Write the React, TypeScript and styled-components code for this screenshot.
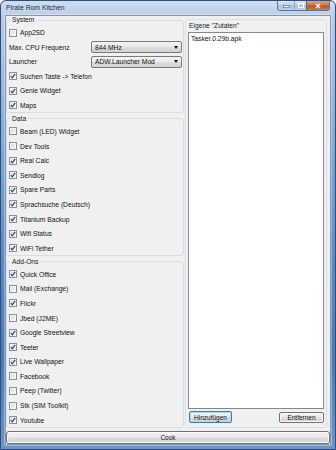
import React, { FC } from "react";
import styled, { createGlobalStyle } from "styled-components";

const GlobalStyle = createGlobalStyle`
  html, body {
    margin: 0;
    padding: 0;
    background: #ffffff;
  }
  * {
    box-sizing: border-box;
  }
`;

const Window = styled.div`
  width: 336px;
  height: 450px;
  display: flex;
  flex-direction: column;
  border: 1px solid #2f4f78;
  border-radius: 6px 6px 0 0;
  background: linear-gradient(180deg, #d0ddee 0%, #b6cbe6 4%, #8fb0da 25%, #5f8cc6 55%, #4a79b7 80%, #6a95cc 100%);
  font-family: "Liberation Sans", Arial, sans-serif;
  padding: 0 4px 4px 4px;
  overflow: hidden;
`;

const TitleBar = styled.div`
  height: 14px;
  display: flex;
  align-items: flex-start;
`;

const Title = styled.span`
  font-size: 6.8px;
  line-height: 8px;
  margin-top: 3px;
  margin-left: 1px;
  color: #1d2d44;
`;

const Captions = styled.div`
  margin-left: auto;
  display: flex;
  margin-right: 1px;
  border: 1px solid #5d7597;
  border-top: none;
  border-radius: 0 0 3px 3px;
  overflow: hidden;
  height: 10px;
`;

const CaptionButton = styled.div<{ $w: number; $close?: boolean }>`
  width: ${(p) => p.$w}px;
  height: 100%;
  display: flex;
  align-items: center;
  justify-content: center;
  background: ${(p) =>
    p.$close
      ? "linear-gradient(180deg, #e4a47f 0%, #cf7445 45%, #b8582a 55%, #c8794c 100%)"
      : "linear-gradient(180deg, #dbe6f3 0%, #c2d3e8 45%, #a9c0dd 55%, #bfd2ea 100%)"};
  border-left: ${(p) => (p.$close ? "1px solid #6e5a52" : "1px solid #8ea5c4")};
  &:first-child {
    border-left: none;
  }
`;

const Client = styled.div`
  flex: 1;
  display: flex;
  flex-direction: column;
  background: #f0f0f0;
  border: 1px solid #8397b3;
  box-shadow: 0 0 0 1px rgba(255, 255, 255, 0.35);
`;

const Main = styled.div`
  flex: 1;
  display: flex;
  min-height: 0;
`;

const LeftColumn = styled.div`
  width: 178px;
  display: flex;
  flex-direction: column;
  gap: 2px;
`;

const Group = styled.fieldset`
  margin: 0;
  min-width: 0;
  padding: 2px 1px 0 1px;
  border: 1px solid #d5dde5;
  border-radius: 3px;
  display: flex;
  flex-direction: column;
  gap: 1.6px;
`;

const Legend = styled.legend`
  font-size: 6.7px;
  line-height: 8px;
  padding: 0 2px;
  margin-left: 2px;
  color: #1a1a1a;
`;

const Row = styled.label`
  height: 13px;
  display: flex;
  align-items: center;
  gap: 3px;
  padding-left: 1px;
  font-size: 6.7px;
  color: #111;
  white-space: nowrap;
`;

const Box = styled.span`
  width: 8px;
  height: 8px;
  flex: none;
  border: 1px solid #8e8f8f;
  background: linear-gradient(135deg, #cfd3d9 0%, #e8eaed 55%, #f9f9f9 100%);
  box-shadow: inset 0 0 0 1px #f5f5f5;
  display: flex;
  align-items: center;
  justify-content: center;
`;

const FieldRow = styled.div`
  height: 13px;
  display: flex;
  align-items: center;
  padding-left: 1px;
  font-size: 6.7px;
  color: #111;
`;

const FieldLabel = styled.span`
  width: 82px;
`;

const Combo = styled.div`
  width: 91px;
  height: 12px;
  border: 1px solid #7a7a7a;
  border-radius: 2px;
  background: linear-gradient(180deg, #f3f3f3 0%, #ebebeb 45%, #dddddd 55%, #d2d2d2 100%);
  display: flex;
  align-items: center;
  padding: 0 3px;
  font-size: 6.7px;
  color: #111;
`;

const ComboArrow = styled.span`
  margin-left: auto;
  width: 0;
  height: 0;
  border-left: 2.5px solid transparent;
  border-right: 2.5px solid transparent;
  border-top: 3px solid #111;
`;

const RightPanel = styled.div`
  width: 142px;
  margin: 3px 0 0 1px;
  border: 1px solid #d9dfe6;
  border-radius: 3px;
  padding: 2px 2px 4px 2px;
  display: flex;
  flex-direction: column;
`;

const PanelLabel = styled.div`
  font-size: 6.7px;
  line-height: 8px;
  margin: 0 0 2px 1px;
  color: #1a1a1a;
`;

const ListBox = styled.div`
  flex: 1;
  background: #ffffff;
  border: 1px solid #828790;
  padding: 2px 2px;
  font-size: 6.7px;
  line-height: 8px;
  color: #111;
`;

const ButtonRow = styled.div`
  display: flex;
  justify-content: space-between;
  align-items: center;
  margin-top: 2px;
  padding-left: 1px;
`;

const Button = styled.div<{ $focused?: boolean; $w?: number }>`
  width: ${(p) => (p.$w ? `${p.$w}px` : "auto")};
  height: ${(p) => (p.$focused ? 12 : 11)}px;
  border: 1px solid ${(p) => (p.$focused ? "#3c7fb1" : "#707070")};
  border-radius: 2px;
  background: linear-gradient(180deg, #f2f2f2 0%, #ebebeb 45%, #dddddd 55%, #cfcfcf 100%);
  box-shadow: ${(p) => (p.$focused ? "inset 0 0 0 1px #a9dbf6" : "inset 0 0 0 1px #fbfbfb")};
  display: flex;
  align-items: center;
  justify-content: center;
  font-size: 6.5px;
  color: #111;
`;

const CookButton = styled(Button)`
  height: 13px;
  margin-top: 3px;
  border-radius: 3px;
`;

const Check: FC = () => (
  <svg width="6" height="6" viewBox="0 0 6 6">
    <path d="M0.8 3.2 L2.3 4.9 L5.2 0.9" fill="none" stroke="#2c4585" strokeWidth="1.2" />
  </svg>
);

const CheckRow: FC<{ label: string; checked?: boolean }> = ({ label, checked }) => (
  <Row>
    <Box>{checked && <Check />}</Box>
    <span>{label}</span>
  </Row>
);

const dataItems: [string, boolean][] = [
  ["Beam (LED) Widget", false],
  ["Dev Tools", false],
  ["Real Calc", true],
  ["Sendlog", true],
  ["Spare Parts", true],
  ["Sprachsuche (Deutsch)", true],
  ["Titanium Backup", true],
  ["Wifi Status", true],
  ["WiFi Tether", true],
];

const addOns: [string, boolean][] = [
  ["Quick Office", true],
  ["Mail (Exchange)", false],
  ["Flickr", true],
  ["Jbed (J2ME)", false],
  ["Google Streetview", true],
  ["Teeter", true],
  ["Live Wallpaper", true],
  ["Facebook", false],
  ["Peep (Twitter)", false],
  ["Stk (SIM Toolkit)", false],
  ["Youtube", true],
];

const App: FC = () => (
  <>
    <GlobalStyle />
    <Window>
      <TitleBar>
        <Title>Pirate Rom Kitchen</Title>
        <Captions>
          <CaptionButton $w={16}>
            <svg width="7" height="4" viewBox="0 0 7 4">
              <rect x="0.5" y="1.5" width="6" height="2" fill="#fff" stroke="#4a5f7d" strokeWidth="0.6" />
            </svg>
          </CaptionButton>
          <CaptionButton $w={12}>
            <svg width="6" height="5" viewBox="0 0 6 5">
              <rect x="0.5" y="0.5" width="5" height="4" fill="none" stroke="#fff" strokeWidth="1" />
            </svg>
          </CaptionButton>
          <CaptionButton $w={23} $close>
            <svg width="6" height="6" viewBox="0 0 6 6">
              <path d="M1 1 L5 5 M5 1 L1 5" stroke="#fff" strokeWidth="1.4" />
            </svg>
          </CaptionButton>
        </Captions>
      </TitleBar>
      <Client>
        <Main>
          <LeftColumn>
            <Group>
              <Legend>System</Legend>
              <CheckRow label="App2SD" />
              <FieldRow>
                <FieldLabel>Max. CPU Frequenz</FieldLabel>
                <Combo>
                  844 MHz
                  <ComboArrow />
                </Combo>
              </FieldRow>
              <FieldRow>
                <FieldLabel>Launcher</FieldLabel>
                <Combo>
                  ADW.Launcher Mod
                  <ComboArrow />
                </Combo>
              </FieldRow>
              <CheckRow label="Suchen Taste -> Telefon" checked />
              <CheckRow label="Genie Widget" checked />
              <CheckRow label="Maps" checked />
            </Group>
            <Group>
              <Legend>Data</Legend>
              {dataItems.map(([label, checked]) => (
                <CheckRow key={label} label={label} checked={checked} />
              ))}
            </Group>
            <Group>
              <Legend>Add-Ons</Legend>
              {addOns.map(([label, checked]) => (
                <CheckRow key={label} label={label} checked={checked} />
              ))}
            </Group>
          </LeftColumn>
          <RightPanel>
            <PanelLabel>Eigene "Zutaten"</PanelLabel>
            <ListBox>Tasker.0.29b.apk</ListBox>
            <ButtonRow>
              <Button $focused $w={43}>Hinzufügen</Button>
              <Button $w={45}>Entfernen</Button>
            </ButtonRow>
          </RightPanel>
        </Main>
        <CookButton>Cook</CookButton>
      </Client>
    </Window>
  </>
);

export default App;
